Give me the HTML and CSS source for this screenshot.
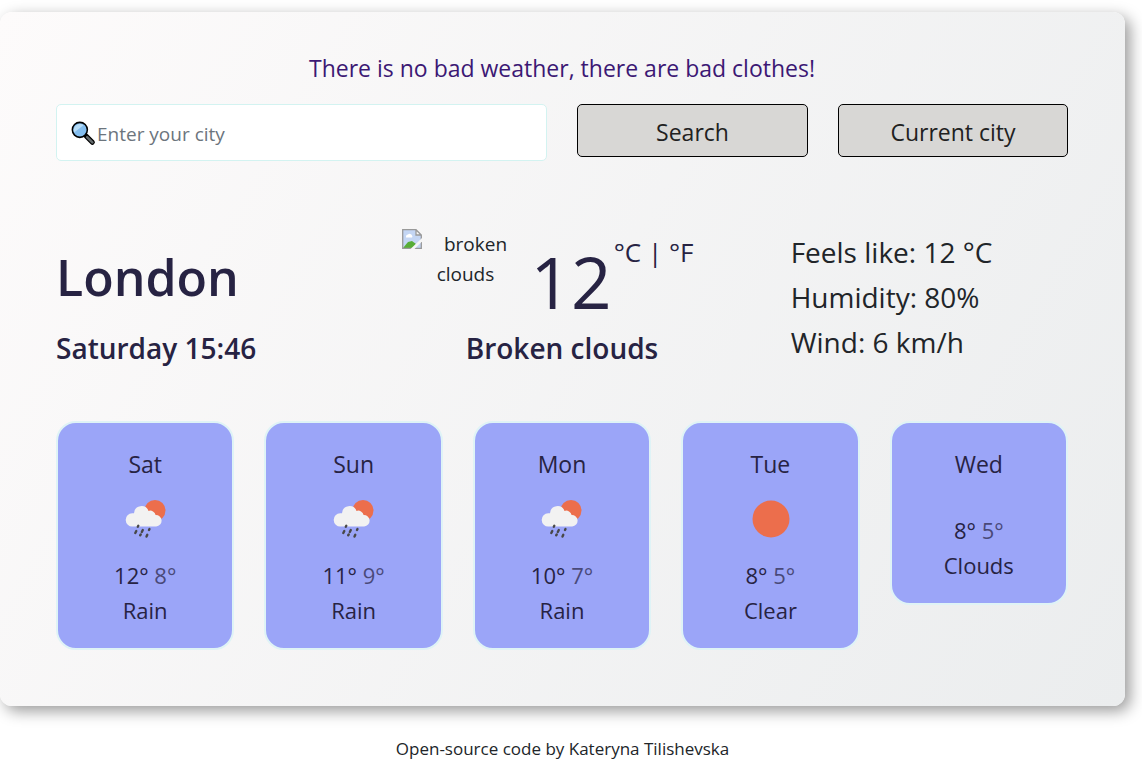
FILE: index.html
```html
<!DOCTYPE html>
<html lang="en">
<head>
<meta charset="utf-8">
<meta name="viewport" content="width=device-width, initial-scale=1">
<title>Weather</title>
<link rel="stylesheet" href="styles.css">
</head>
<body>
<svg class="symbols" aria-hidden="true">
  <symbol id="rain" viewBox="0 0 45 45">
    <circle cx="32" cy="14.500" r="10.500" fill="#ec6e4c"/>
    <path d="M9.500 30.500a6.500 6.500 0 0 1-.3-13.300h1.800a7.500 7.500 0 0 1 14.500-2.300 5.500 5.500 0 0 1 7.100 4.200 5.700 5.700 0 0 1 .6 11.400z" fill="#f2f2f2"/>
    <path d="M15.300 29.800l-.5 1M13.300 35l-1 2M19.800 34l-1 2M26.500 33l-.5 1M17.700 38.500l-.5.700M24.300 38.800l-.8 1.800" stroke="#484848" stroke-width="2.400" stroke-linecap="round"/>
  </symbol>
</svg>
<main class="card">
  <h2 class="slogan">There is no bad weather, there are bad clothes!</h2>
  <form class="search">
    <label class="field">
      <svg class="lens" viewBox="0 0 24 24" aria-hidden="true">
        <path d="M14.500 14.500L20.500 20.500" stroke="#000" stroke-width="4.800" stroke-linecap="round"/>
        <path d="M15.500 15.500L20.500 20.500" stroke="#62696b" stroke-width="2.500" stroke-linecap="round"/>
        <circle cx="8.500" cy="8.500" r="7.200" fill="#83bdee" stroke="#000" stroke-width="1.500"/>
        <path d="M3 11A6 6 0 0 1 12 4z" fill="#b7dcf6"/>
      </svg>
      <input class="city-input" type="search" placeholder="Enter your city" aria-label="City">
    </label>
    <button class="btn" type="submit">Search</button>
    <button class="btn" type="button">Current city</button>
  </form>
  <section class="current">
    <div class="place">
      <h1 class="city">London</h1>
      <h3 class="caption">Saturday 15:46</h3>
    </div>
    <div class="now">
      <div class="reading">
        <div class="condition">
          <svg class="missing" viewBox="0 0 20 20" aria-hidden="true">
            <path d="M.5.500h13.500l5.500 5.500v13.500H.5z" fill="#c4d6f4"/>
            <path d="M1 19l5-6 4-1 4 3-3 4z" fill="#57ad36"/>
            <path d="M4 7.500a2 2 0 0 1 2-2 2.500 2.500 0 0 1 4 1 1.500 1.500 0 0 1 0 2H4z" fill="#fff"/>
            <path d="M14 .5V6h5.500z" fill="#f6f6f6"/>
            <path d="M.7.700H14l5.300 5.300v13.300H.7zM14 .7V6h5.300" fill="none" stroke="#999" stroke-width="1.300"/>
            <path d="M8.500 20L20 9v3.500L12.500 20z" fill="#f5f5f5"/>
          </svg>
          broken<br>clouds
        </div>
        <strong class="degrees">12</strong>
        <span class="units">°C | °F</span>
      </div>
      <h3 class="caption">Broken clouds</h3>
    </div>
    <ul class="details">
      <li>Feels like: 12 °C</li>
      <li>Humidity: 80%</li>
      <li>Wind: 6 km/h</li>
    </ul>
  </section>
  <section class="forecast">
    <article class="day"><span class="name">Sat</span><svg class="icon"><use href="#rain"/></svg><span class="temps">12° <span class="low">8°</span></span><span>Rain</span></article>
    <article class="day"><span class="name">Sun</span><svg class="icon"><use href="#rain"/></svg><span class="temps">11° <span class="low">9°</span></span><span>Rain</span></article>
    <article class="day"><span class="name">Mon</span><svg class="icon"><use href="#rain"/></svg><span class="temps">10° <span class="low">7°</span></span><span>Rain</span></article>
    <article class="day"><span class="name">Tue</span><svg class="icon" viewBox="0 0 45 45"><circle cx="23" cy="23" r="18.500" fill="#ec6e4c"/></svg><span class="temps">8° <span class="low">5°</span></span><span>Clear</span></article>
    <article class="day"><span class="name">Wed</span><span class="temps">8° <span class="low">5°</span></span><span>Clouds</span></article>
  </section>
</main>
<footer class="footer">Open-source code by Kateryna Tilishevska</footer>
</body>
</html>
```
FILE: styles.css
```css
* { box-sizing: border-box; }
body {
  margin: 0;
  padding: 12px 17px 0 0;
  background: #fff;
  color: #212529;
  font-family: "Segoe UI", "Open Sans", "Noto Sans", sans-serif;
  font-size: 19px;
  line-height: 30px;
}
h1, h2, h3, ul { margin: 0; padding: 0; font-weight: 400; }
.symbols { display: none; }
.card {
  padding: 40px 57px 56px 56px;
  border-radius: 12px;
  background: linear-gradient(120deg, #fdfbfb 0%, #ebedee 100%);
  box-shadow: 5px 5px 15px rgba(0, 0, 0, .4);
}
.slogan {
  margin-bottom: 20px;
  color: #3c1874;
  font-size: 23px;
  line-height: 32px;
  text-align: center;
}
.search {
  display: grid;
  grid-template-columns: 491fr 231fr 230fr;
  gap: 30px;
  align-items: start;
}
.field {
  display: flex;
  align-items: center;
  height: 57px;
  padding: 2px 14px 0;
  border: 1px solid #d3f3f1;
  border-radius: 5px;
  background: #fff;
}
.lens { flex: none; width: 25px; height: 25px; }
.city-input {
  flex: 1;
  min-width: 0;
  padding: 0 1px;
  border: 0;
  outline: 0;
  background: none;
  color: #212529;
  font: inherit;
}
.city-input::placeholder { color: #6c757d; opacity: 1; }
.btn {
  height: 53px;
  padding: 2px 8px 0;
  border: 1px solid #000;
  border-radius: 5px;
  background: #d8d7d5;
  color: #212121;
  font: inherit;
  font-size: 23px;
}
.current {
  display: grid;
  grid-template-columns: repeat(3, minmax(0, 1fr));
  gap: 30px;
  margin-top: 68px;
  color: #272343;
}
.place { padding-top: 15px; }
.city { font-size: 50px; font-weight: 600; line-height: 66px; }
.caption { font-size: 28px; font-weight: 600; line-height: 34px; }
.place .caption { margin-top: 21px; }
.now { text-align: center; }
.reading {
  display: flex;
  justify-content: center;
  height: 102px;
  padding-right: 28px;
}
.condition { flex: none; width: 126px; color: #212529; }
.missing { float: left; width: 20px; height: 20px; }
.degrees {
  margin: 0 2px;
  font-size: 71px;
  font-weight: 400;
  line-height: 106px;
}
.units { font-size: 26px; line-height: 47px; white-space: nowrap; }
.details {
  padding: 1px 0 0 40px;
  list-style: none;
  color: #212529;
  font-size: 28px;
  line-height: 45px;
}
.forecast {
  display: grid;
  grid-template-columns: repeat(5, minmax(0, 1fr));
  gap: 30px;
  align-items: start;
  margin-top: 56px;
}
.day {
  display: flex;
  flex-direction: column;
  align-items: center;
  padding: 24px 8px 20px;
  border: 2px solid #dff3f6;
  border-radius: 20px;
  background: #9ba5f8;
  color: #272343;
  font-size: 22px;
  line-height: 35px;
}
.name { margin-bottom: 14px; font-size: 23px; }
.icon { width: 45px; height: 45px; }
.temps { margin-top: 17px; }
.low { opacity: .7; }
.footer { padding: 28px 0; font-size: 17px; text-align: center; }
```
